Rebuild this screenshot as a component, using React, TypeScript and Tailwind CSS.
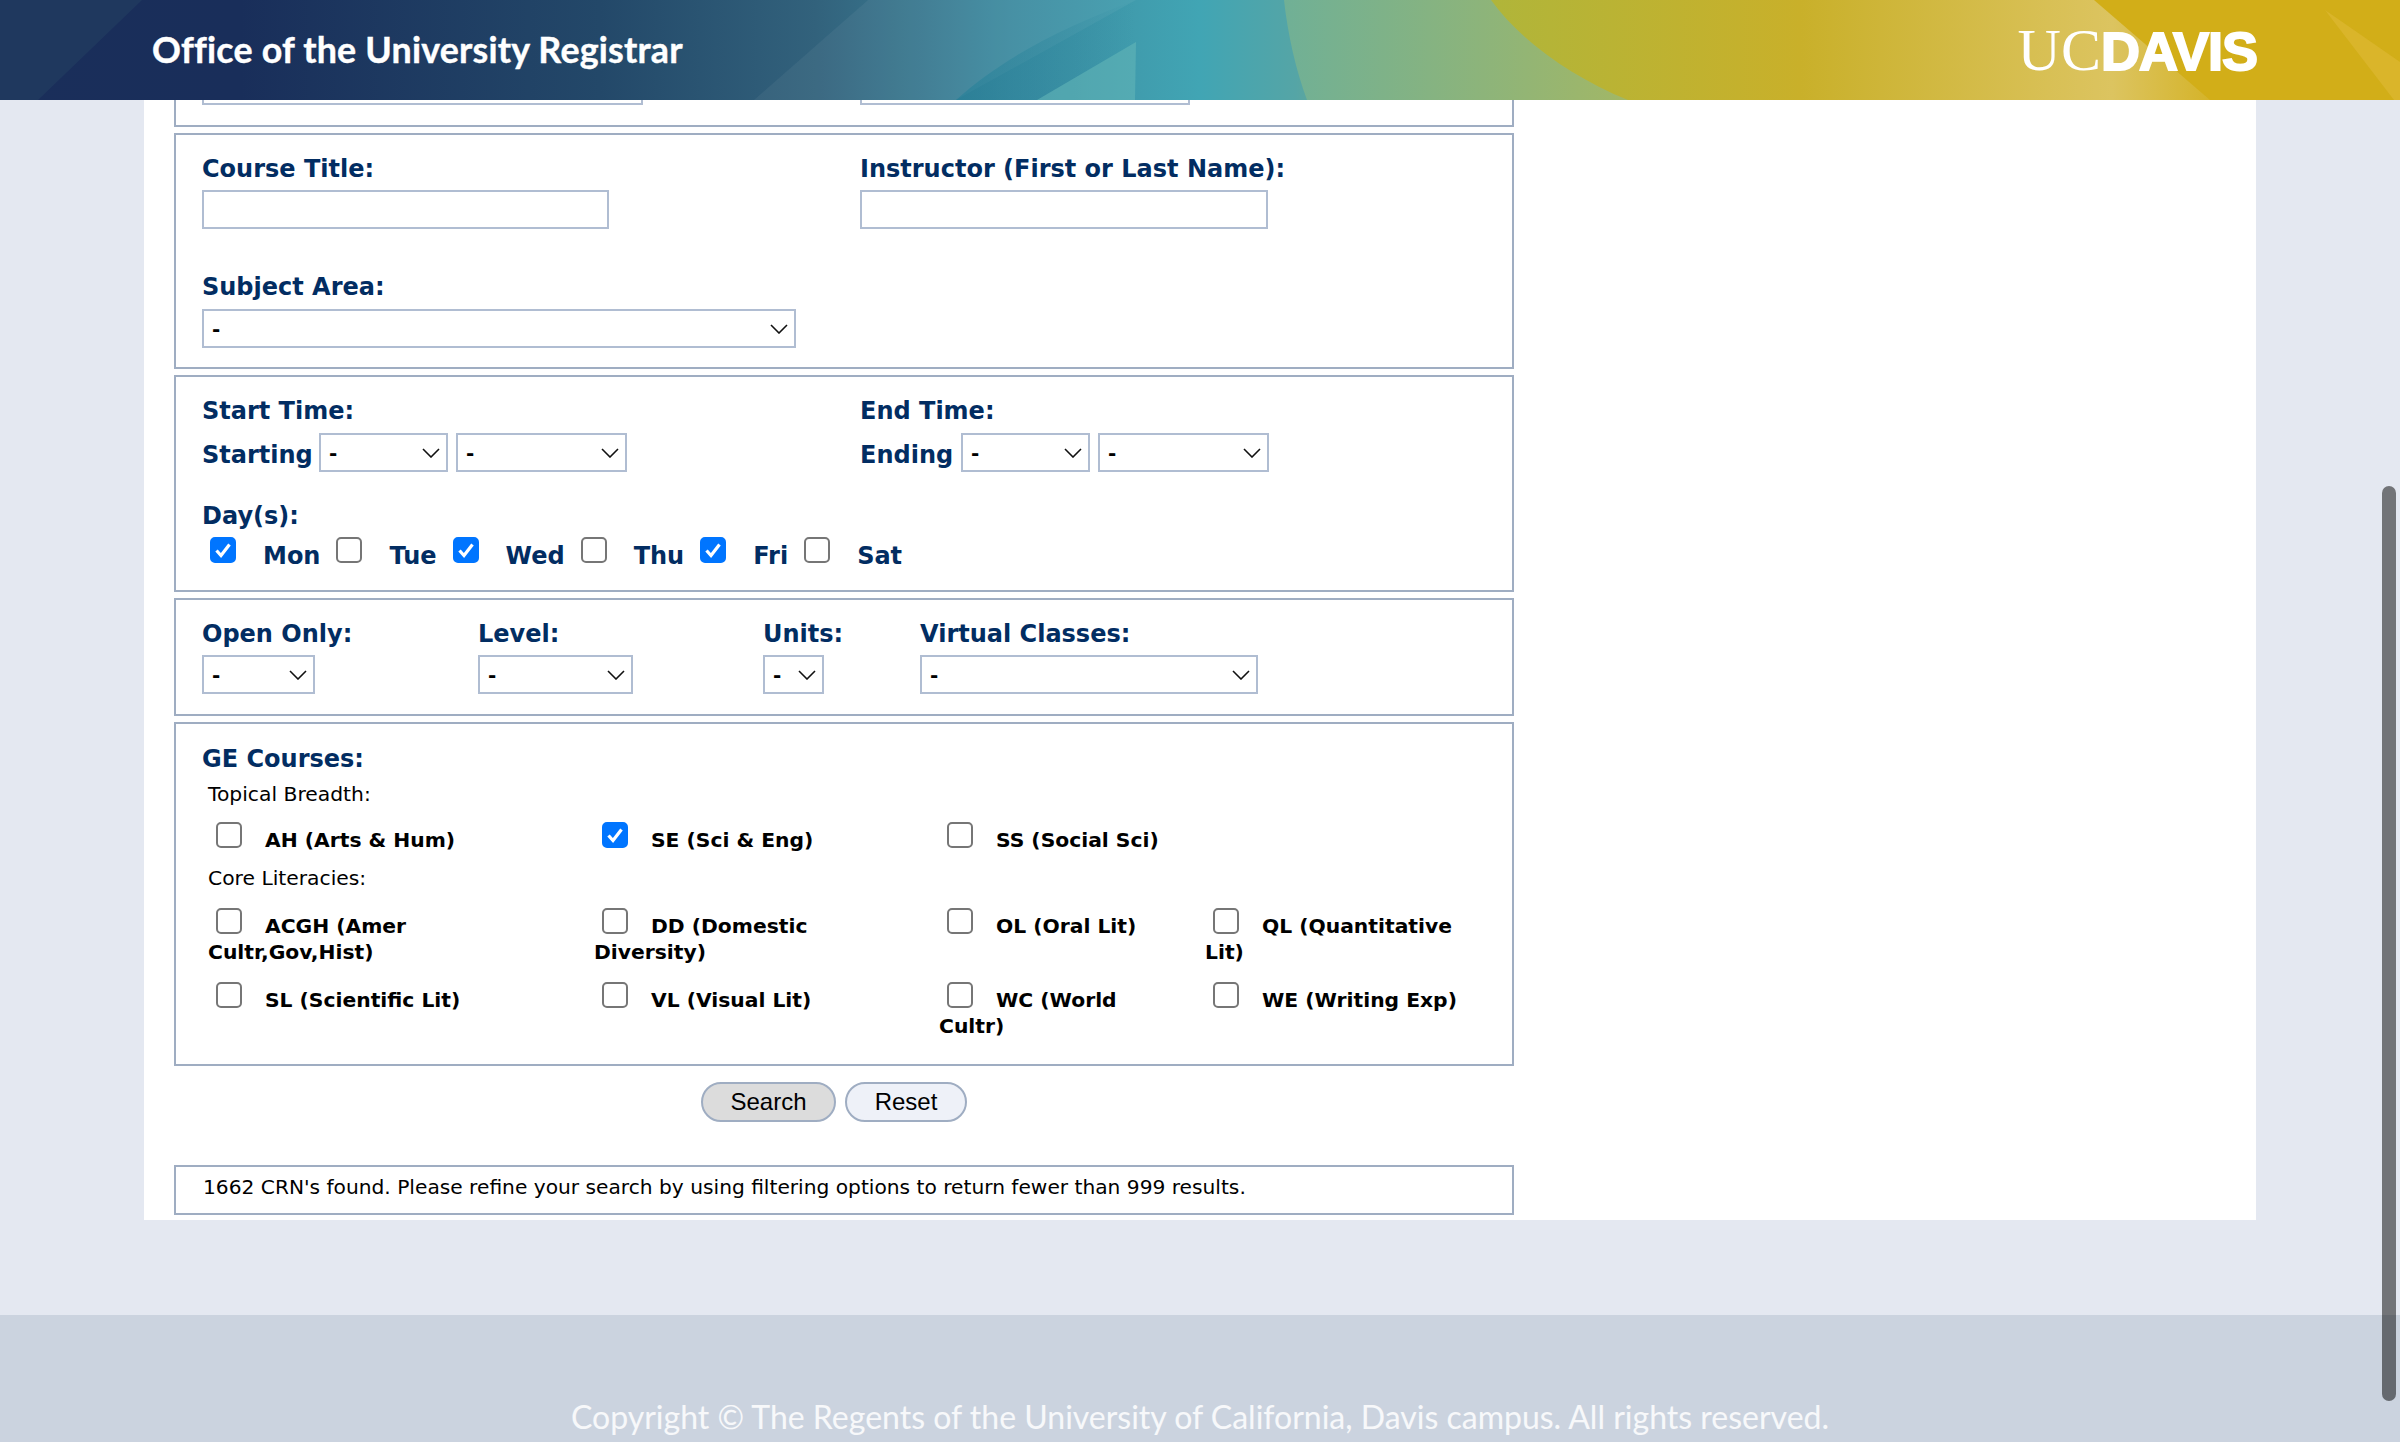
import React from "react"

// Office of the University Registrar - class search form, scrolled part way down

function HeaderArt() {
  return (
    <svg className="absolute inset-0 w-full h-full" viewBox="0 0 2400 100" preserveAspectRatio="none">
      <defs>
        <linearGradient id="base" x1="0" y1="0" x2="2400" y2="0" gradientUnits="userSpaceOnUse">
          <stop offset="0" stopColor="#1a2e5a" />
          <stop offset="0.1" stopColor="#192e5a" />
          <stop offset="0.25" stopColor="#234869" />
          <stop offset="0.34" stopColor="#32627c" />
          <stop offset="0.42" stopColor="#3e8ba0" />
          <stop offset="0.5" stopColor="#41a5b4" />
          <stop offset="0.54" stopColor="#55a5a6" />
          <stop offset="0.62" stopColor="#b0b53a" />
          <stop offset="0.75" stopColor="#c9b02a" />
          <stop offset="0.88" stopColor="#dcc460" />
          <stop offset="0.93" stopColor="#d3b01e" />
          <stop offset="1" stopColor="#dcae12" />
        </linearGradient>
        <linearGradient id="dark" x1="950" y1="0" x2="1136" y2="0" gradientUnits="userSpaceOnUse">
          <stop offset="0" stopColor="#1f7f98" stopOpacity="0.55" />
          <stop offset="1" stopColor="#1f7f98" stopOpacity="0" />
        </linearGradient>
        <linearGradient id="green" x1="1284" y1="0" x2="1628" y2="0" gradientUnits="userSpaceOnUse">
          <stop offset="0" stopColor="#70b096" />
          <stop offset="1" stopColor="#a2b766" />
        </linearGradient>
      </defs>
      <rect width="2400" height="100" fill="url(#base)" />
      <polygon points="0,0 142,0 38,100 0,100" fill="#2a4a66" fillOpacity="0.35" />
      <polygon points="868,0 1136,0 956,100 754,100" fill="#ffffff" fillOpacity="0.05" />
      <path d="M1136 0 C1060 28 1000 60 956 100 L1136 100 Z" fill="url(#dark)" />
      <polygon points="1136,42 1037,100 1135,100" fill="#62b6b8" fillOpacity="0.6" />
      <path d="M1284 0 L1491 0 C1520 40 1570 76 1628 100 L1307 100 C1296 70 1288 36 1284 0 Z" fill="url(#green)" />
      <polygon points="2094,0 2400,0 2400,100 2210,100" fill="#d2ae18" />
      <polygon points="2325,10 2400,62 2400,100 2394,100" fill="#e2bc3c" fillOpacity="0.5" />
    </svg>
  )
}

function Label({ children, className = "" }: { children: React.ReactNode; className?: string }) {
  return <div className={`text-[24px] leading-[30px] font-bold text-[#022d62] ${className}`}>{children}</div>
}

function TextBox({ className = "" }: { className?: string }) {
  return <input type="text" className={`block h-[39px] border-2 border-[#b0bdd2] bg-white ${className}`} />
}

function Select({ className = "", value = "-", inner = "pl-[8px]" }: { className?: string; value?: string; inner?: string }) {
  return (
    <div className={`relative h-[39px] shrink-0 ${className}`}>
      <select
        defaultValue={value}
        className={`appearance-none block w-full h-full border-2 border-[#b0bdd2] bg-white text-[20px] font-bold text-black outline-none ${inner}`}
      >
        <option>{value}</option>
      </select>
      <svg className="absolute right-[8px] top-[15px] w-[18px] h-[10px]" viewBox="0 0 18 10" fill="none">
        <polyline points="1,1 9,9 17,1" stroke="#111" strokeWidth="1.6" />
      </svg>
    </div>
  )
}

function Check({ checked = false, className = "" }: { checked?: boolean; className?: string }) {
  return (
    <span className={`relative inline-block w-[26px] h-[26px] ${className}`}>
      <input
        type="checkbox"
        defaultChecked={checked}
        className="appearance-none block w-[26px] h-[26px] rounded-[5px] border-2 border-[#767676] bg-white checked:border-[#0075ff] checked:bg-[#0075ff]"
      />
      {checked && (
        <svg className="absolute inset-0 w-[26px] h-[26px]" viewBox="0 0 26 26" fill="none">
          <polyline points="6.5,13.5 11,18.5 19.5,7.5" stroke="#fff" strokeWidth="3.2" />
        </svg>
      )}
    </span>
  )
}

const days = [
  { name: "Mon", checked: true },
  { name: "Tue", checked: false },
  { name: "Wed", checked: true },
  { name: "Thu", checked: false },
  { name: "Fri", checked: true },
  { name: "Sat", checked: false },
]

function GeCell({ checked = false, first, rest }: { checked?: boolean; first: string; rest?: string }) {
  return (
    <div className="text-[20.3px] leading-[26px] font-bold text-black">
      <Check checked={checked} className="ml-[8px] mr-[23px] [vertical-align:-1px]" />
      {first}
      {rest && <br />}
      {rest}
    </div>
  )
}

const geGrid = "grid grid-cols-[386px_345px_266px_1fr] ml-[6px]"

export default function App() {
  return (
    <div className="relative flex flex-col h-screen overflow-hidden bg-[#e4e8f1] font-['DejaVu_Sans',sans-serif]">
      {/* Header */}
      <header className="relative flex items-center justify-between h-[100px] shrink-0 pl-[152px] pr-[143px] overflow-hidden">
        <HeaderArt />
        <div className="relative text-white text-[35.8px] tracking-[0.2px] font-bold [-webkit-text-stroke:0.4px_white] font-['Lato',sans-serif]">
          Office of the University Registrar
        </div>
        <div className="relative flex items-baseline text-white">
          <span className="text-[60px] leading-none font-['Liberation_Serif',serif]">UC</span>
          <span className="text-[54px] leading-none font-bold tracking-[-1px] [-webkit-text-stroke:2px_white] font-['Liberation_Sans',sans-serif]">DAVIS</span>
        </div>
      </header>

      {/* Form */}
      <main className="w-[2112px] ml-[144px] pl-[30px] pb-[5px] bg-white shrink-0">
        <div className="w-[1340px] flex flex-col gap-[6px]">
          <section className="h-[27px] overflow-hidden border-2 border-t-0 border-[#9fadc2] pl-[26px] grid grid-cols-[658px_1fr]">
            <Select className="w-[441px] -mt-[34px]" value="Fall Quarter 2023" inner="pl-[14px]" />
            <Select className="w-[330px] -mt-[34px]" value="-" />
          </section>

          <section className="border-2 border-[#9fadc2] pl-[26px] pt-[19px] pb-[19px]">
            <div className="grid grid-cols-[658px_1fr]">
              <div>
                <Label>Course Title:</Label>
                <TextBox className="w-[407px] mt-[6px]" />
              </div>
              <div>
                <Label>Instructor (First or Last Name):</Label>
                <TextBox className="w-[408px] mt-[6px]" />
              </div>
            </div>
            <Label className="mt-[43px]">Subject Area:</Label>
            <Select className="w-[594px] mt-[7px]" />
          </section>

          <section className="border-2 border-[#9fadc2] pl-[26px] pt-[19px] pb-[19px]">
            <div className="grid grid-cols-[658px_1fr]">
              <div>
                <Label>Start Time:</Label>
                <div className="flex items-center gap-[8px] mt-[7px]">
                  <Label className="w-[109px] mt-[5px]">Starting</Label>
                  <Select className="w-[129px]" />
                  <Select className="w-[171px]" />
                </div>
              </div>
              <div>
                <Label>End Time:</Label>
                <div className="flex items-center gap-[8px] mt-[7px]">
                  <Label className="w-[93px] mt-[5px]">Ending</Label>
                  <Select className="w-[129px]" />
                  <Select className="w-[171px]" />
                </div>
              </div>
            </div>
            <Label className="mt-[29px]">Day(s):</Label>
            <div className="flex items-start mt-[6px] pl-[8px]">
              {days.map((d) => (
                <div key={d.name} className="flex items-start mr-[16px]">
                  <Check checked={d.checked} className="mr-[27px]" />
                  <Label className="mt-[4px]">{d.name}</Label>
                </div>
              ))}
            </div>
          </section>

          <section className="border-2 border-[#9fadc2] pl-[26px] pt-[19px] pb-[20px] grid grid-cols-[276px_285px_157px_1fr]">
            <div>
              <Label>Open Only:</Label>
              <Select className="w-[113px] mt-[6px]" />
            </div>
            <div>
              <Label>Level:</Label>
              <Select className="w-[155px] mt-[6px]" />
            </div>
            <div>
              <Label>Units:</Label>
              <Select className="w-[61px] mt-[6px]" />
            </div>
            <div>
              <Label>Virtual Classes:</Label>
              <Select className="w-[338px] mt-[6px]" />
            </div>
          </section>

          <section className="border-2 border-[#9fadc2] pl-[26px] pt-[20px] pb-[25px]">
            <Label>GE Courses:</Label>
            <div className="ml-[6px] mt-[7px] text-[20.3px] leading-[26px] text-black">Topical Breadth:</div>
            <div className={`${geGrid} mt-[15px]`}>
              <GeCell first="AH (Arts & Hum)" />
              <GeCell checked first="SE (Sci & Eng)" />
              <GeCell first="SS (Social Sci)" />
            </div>
            <div className="ml-[6px] mt-[12px] text-[20.3px] leading-[26px] text-black">Core Literacies:</div>
            <div className={`${geGrid} mt-[17px]`}>
              <GeCell first="ACGH (Amer" rest="Cultr,Gov,Hist)" />
              <GeCell first="DD (Domestic" rest="Diversity)" />
              <GeCell first="OL (Oral Lit)" />
              <GeCell first="QL (Quantitative" rest="Lit)" />
            </div>
            <div className={`${geGrid} mt-[17px]`}>
              <GeCell first="SL (Scientific Lit)" />
              <GeCell first="VL (Visual Lit)" />
              <GeCell first="WC (World" rest="Cultr)" />
              <GeCell first="WE (Writing Exp)" />
            </div>
          </section>

          <div className="flex gap-[9px] pl-[527px] mt-[10px] font-['Liberation_Sans',sans-serif] text-[24px] text-black">
            <button className="w-[135px] h-[40px] rounded-full border-2 border-[#9fadc2] bg-[#dcdcdc]">Search</button>
            <button className="w-[122px] h-[40px] rounded-full border-2 border-[#9fadc2] bg-[#eef1f8]">Reset</button>
          </div>

          <div className="h-[50px] mt-[37px] border-2 border-[#9fadc2] pl-[27px] text-[20.2px] leading-[40px] text-black">
            1662 CRN's found. Please refine your search by using filtering options to return fewer than 999 results.
          </div>
        </div>
      </main>

      <div className="flex-1" />

      {/* Footer */}
      <footer className="h-[127px] shrink-0 bg-[#cbd3df] pt-[82px] text-center text-[32px] leading-[40px] text-white/85 font-['Lato',sans-serif]">
        Copyright © The Regents of the University of California, Davis campus. All rights reserved.
      </footer>

      {/* Overlay scrollbar */}
      <div className="absolute right-[4px] top-[486px] w-[14px] h-[915px] rounded-full bg-black/50" />
    </div>
  )
}
